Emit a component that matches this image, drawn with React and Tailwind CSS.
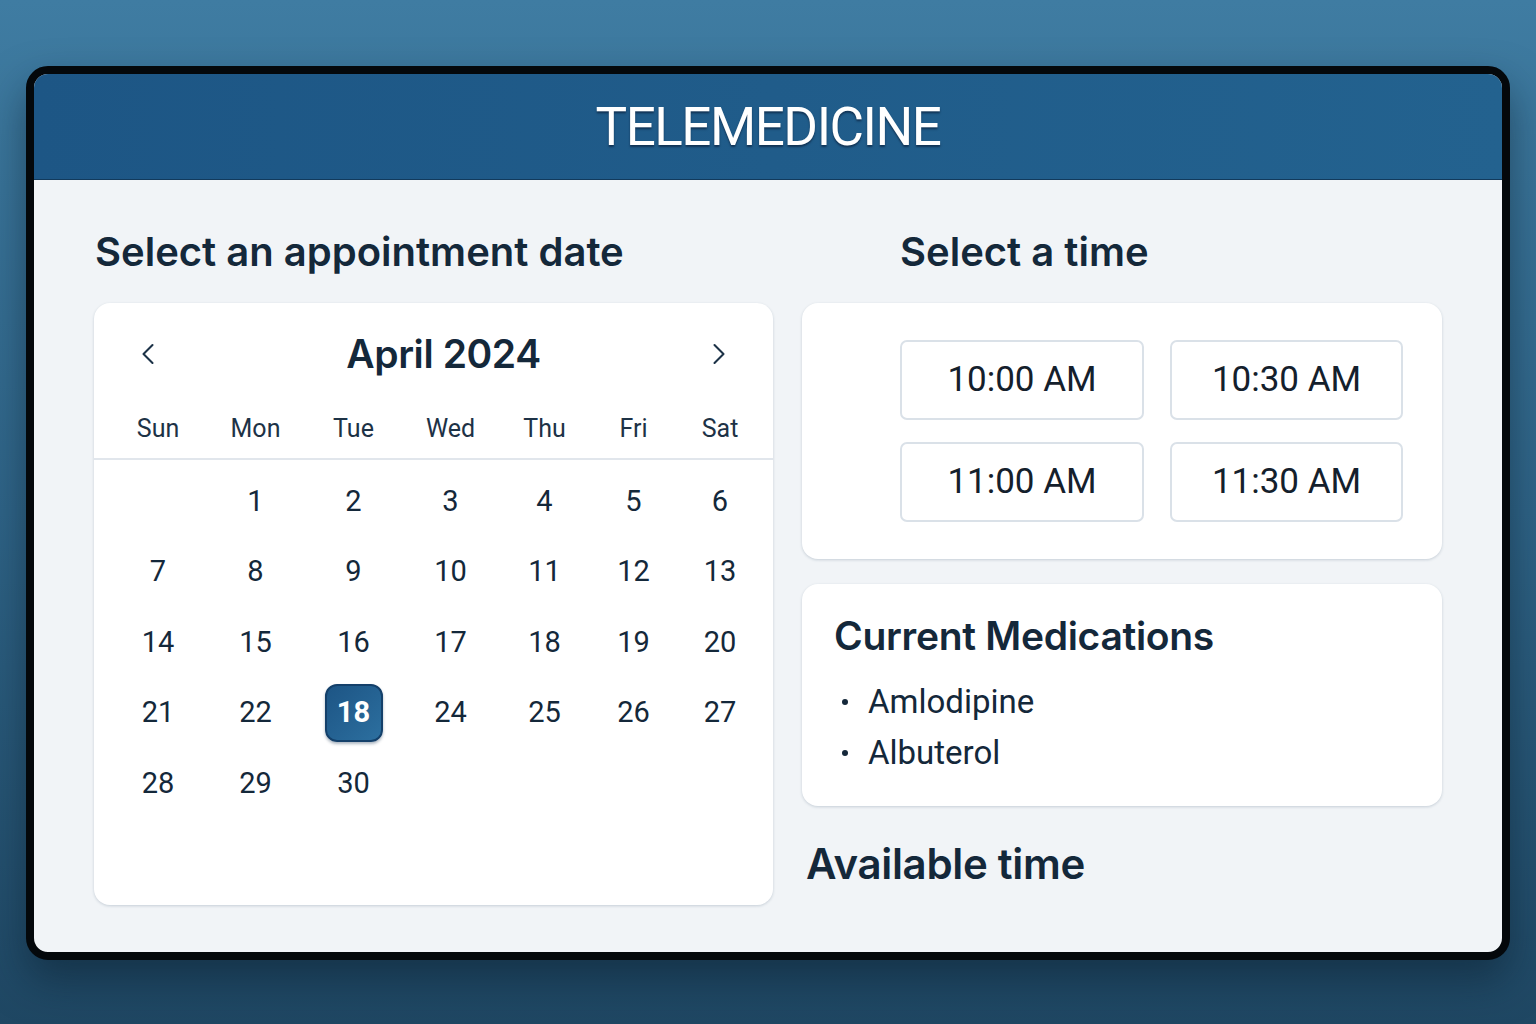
import { ChevronLeft, ChevronRight } from 'lucide-react';

const weekdays = ['Sun', 'Mon', 'Tue', 'Wed', 'Thu', 'Fri', 'Sat'];
const times = ['10:00 AM', '10:30 AM', '11:00 AM', '11:30 AM'];
const meds = ['Amlodipine', 'Albuterol'];

// calendar grid as shown (selected cell sits in the 4th week, Tue)
const days = [
  null, 1, 2, 3, 4, 5, 6,
  7, 8, 9, 10, 11, 12, 13,
  14, 15, 16, 17, 18, 19, 20,
  21, 22, 'sel', 24, 25, 26, 27,
  28, 29, 30,
];

export default function App() {
  return (
    <div
      className="min-h-screen w-full bg-gradient-to-b from-[#3f7ca2] via-[#2f6487] to-[#1f4763] px-[26px] pt-[66px] pb-[64px]"
      style={{ fontFamily: 'Inter, "Noto Sans", sans-serif' }}
    >
      <div className="rounded-[22px] border-[8px] border-[#04080b] bg-[#f1f4f7] shadow-[0_20px_40px_rgba(10,30,45,0.5)] overflow-hidden">
        {/* Header */}
        <div className="h-[106px] bg-gradient-to-r from-[#1d5685] to-[#23628f] border-b border-[#123a5c] flex items-center justify-center">
          <h1
            className="text-white text-[53px] tracking-[-1.5px] leading-none mt-[2px]"
            style={{ fontFamily: 'Roboto, "Liberation Sans", sans-serif', textShadow: '0 2px 2px rgba(8,25,50,0.6)' }}
          >
            TELEMEDICINE
          </h1>
        </div>

        {/* Body */}
        <div className="flex gap-[29px] pl-[60px] pr-[60px] pt-[47px] pb-[47px]">
          {/* Left column */}
          <div className="w-[679px] flex flex-col">
            <h2 className="text-[40px] font-semibold text-[#14283a] leading-[50px] ml-[1px]">
              Select an appointment date
            </h2>
            <div className="mt-[26px] bg-white rounded-[16px] shadow-[0_1px_3px_rgba(30,60,90,0.2)] pb-[86px]">
              <div className="flex items-center justify-between pl-[36px] pr-[36px] pt-[0px] pb-[10px] h-[111px] relative">
                <ChevronLeft className="w-[36px] h-[36px] text-[#1c3247]" strokeWidth={1.4} />
                <div className="absolute left-0 right-0 top-[26px] text-center pl-[20px] text-[39px] leading-[50px] font-semibold text-[#14283a] tracking-[-0.4px]">
                  April 2024
                </div>
                <ChevronRight className="w-[36px] h-[36px] text-[#1c3247]" strokeWidth={1.4} />
              </div>
              <div
                className="grid grid-cols-[96px_99px_97px_97px_91px_87px_86px] pl-[16px] pr-[10px] h-[46px] items-start border-b-2 border-[#e1e6ec]"
                style={{ fontFamily: 'Roboto, Inter, sans-serif' }}
              >
                {weekdays.map((d) => (
                  <div key={d} className="text-center text-[25px] leading-[30px] text-[#1d3246]">{d}</div>
                ))}
              </div>
              <div
                className="grid grid-cols-[96px_99px_97px_97px_91px_87px_86px] pl-[16px] pr-[10px] pt-[6px]"
                style={{ fontFamily: 'Roboto, Inter, sans-serif' }}
              >
                {days.map((d, i) => (
                  <div key={i} className="h-[70.5px] flex items-center justify-center">
                    {d === 'sel' ? (
                      <div className="w-[58px] h-[58px] rounded-[12px] bg-gradient-to-br from-[#1d5585] to-[#2c6f9f] border-2 border-[#14406a] flex items-center justify-center text-white text-[29px] font-bold shadow-[0_2px_3px_rgba(20,50,80,0.35)]">
                        18
                      </div>
                    ) : (
                      <span className="text-[29px] text-[#14283a]">{d ?? ''}</span>
                    )}
                  </div>
                ))}
              </div>
            </div>
          </div>

          {/* Right column */}
          <div className="w-[640px] flex flex-col">
            <h2 className="text-[40px] font-semibold text-[#14283a] leading-[50px] ml-[98px]">
              Select a time
            </h2>
            <div className="mt-[26px] bg-white rounded-[16px] shadow-[0_1px_3px_rgba(30,60,90,0.2)] pl-[98px] pr-[39px] py-[37px]">
              <div className="grid grid-cols-[244px_233px] gap-x-[26px] gap-y-[22px]">
                {times.map((t) => (
                  <div
                    key={t}
                    className="h-[80px] rounded-[7px] border-2 border-[#dae1e8] flex items-center justify-center text-[35px] text-[#14202c]"
                    style={{ fontFamily: 'Roboto, Inter, sans-serif' }}
                  >
                    {t}
                  </div>
                ))}
              </div>
            </div>

            <div className="mt-[25px] bg-white rounded-[16px] shadow-[0_1px_3px_rgba(30,60,90,0.2)] px-[32px] pt-[29px] pb-[28px]">
              <h3 className="text-[39px] font-semibold text-[#14283a] leading-[46px] tracking-[-0.3px]">
                Current Medications
              </h3>
              <ul className="mt-[17px]" style={{ fontFamily: 'Roboto, Inter, sans-serif' }}>
                {meds.map((m) => (
                  <li key={m} className="flex items-center h-[51px] text-[33px] text-[#14283a]">
                    <span className="w-[6px] h-[6px] rounded-full bg-[#14283a] ml-[8px] mr-[20px]" />
                    {m}
                  </li>
                ))}
              </ul>
            </div>

            <h2 className="mt-[33px] ml-[4px] text-[42px] font-semibold text-[#14283a] leading-[50px] tracking-[-0.3px]">
              Available time
            </h2>
          </div>
        </div>
      </div>
    </div>
  );
}
